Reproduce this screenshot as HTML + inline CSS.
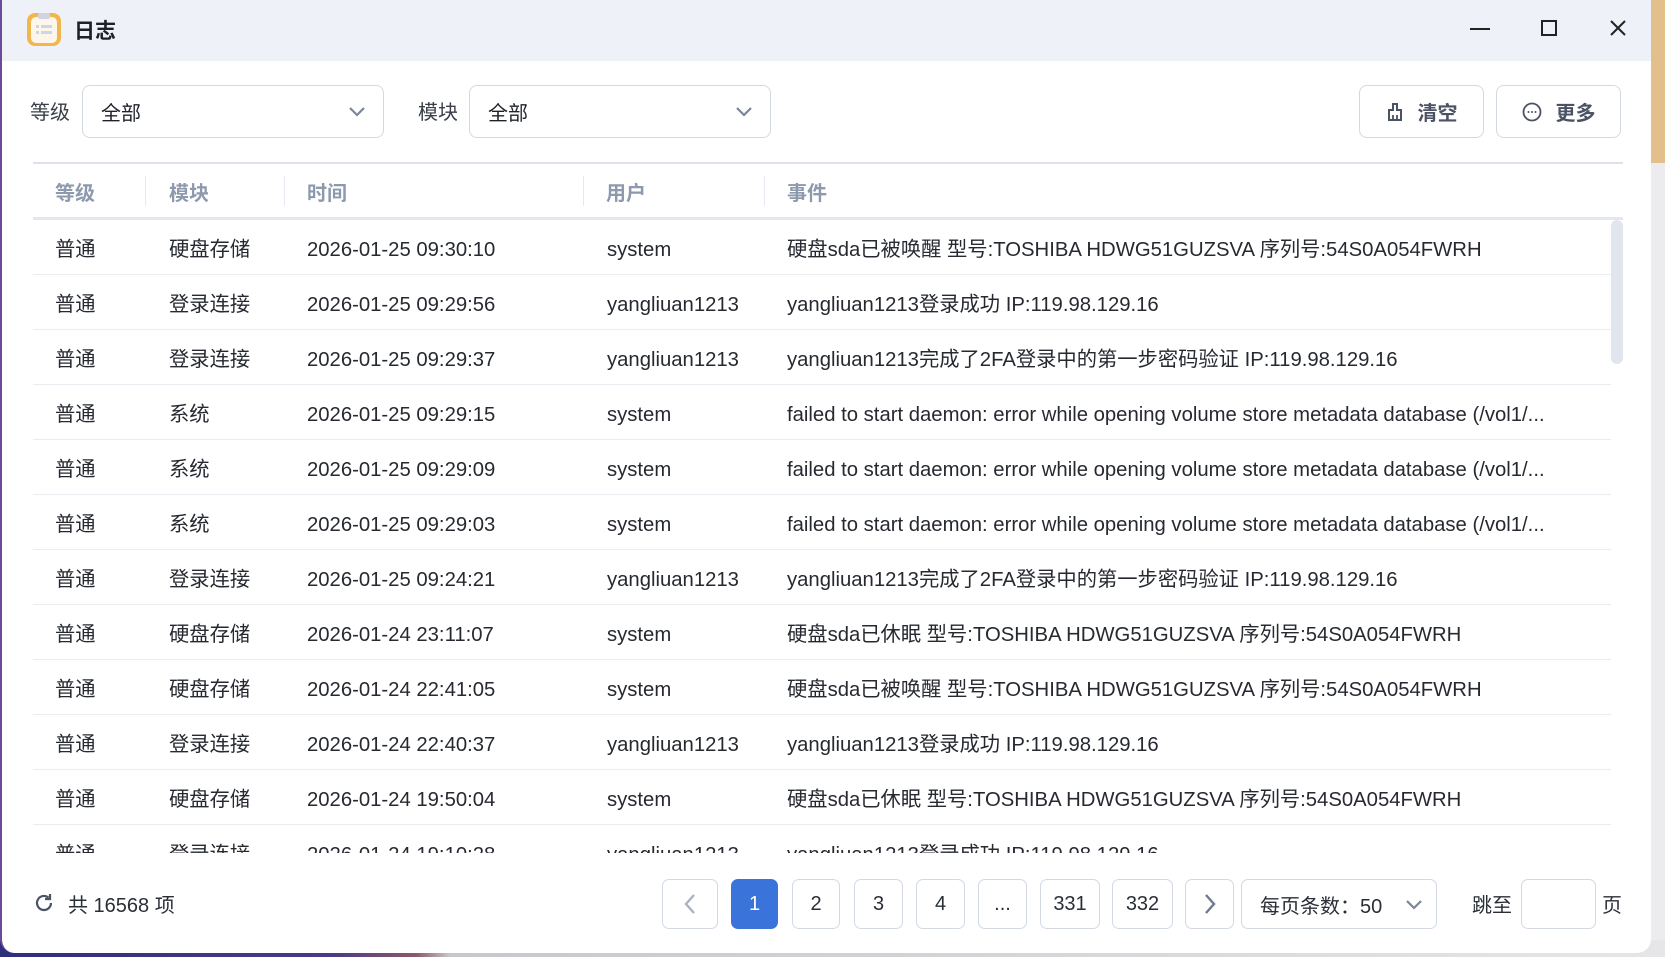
<!DOCTYPE html>
<html><head><meta charset="utf-8"><style>
*{box-sizing:border-box;margin:0;padding:0}
body{width:1665px;height:957px;position:relative;overflow:hidden;background:#ececee;font-family:"Liberation Sans","Noto Sans CJK SC",sans-serif;color:#1f2329}
.wp1{position:absolute;left:1651px;top:0;width:14px;height:163px;background:#e3bf8c}
.wp2{position:absolute;left:0;top:940px;width:1665px;height:17px;background:linear-gradient(90deg,#2e2f7a,#4b3a86 20%,#8a5a6a 25%,#c7c7cc 27%,#e6e6e8)}
.win{position:absolute;left:0;top:0;width:1651px;height:953px;background:#fff;border-radius:0 0 14px 14px;overflow:hidden;border-left:2px solid #6b4a9a}
.tb{position:absolute;left:0;top:0;width:100%;height:61px;background:#eef2f8}
.abs{position:absolute}
.sel{position:absolute;height:53px;border:1px solid #d3d9e2;border-radius:8px;font-size:20px;line-height:57px;padding:0 0 0 18px}
.btn{position:absolute;height:53px;border:1px solid #d3d9e2;border-radius:8px;font-size:20px;font-weight:bold;color:#4a5263;display:flex;align-items:center;justify-content:center;gap:14px}
.th{position:absolute;top:177px;font-size:20px;font-weight:bold;color:#8d99ad}
.sep{position:absolute;top:176px;width:1px;height:30px;background:#e6eaf0}
.row{position:absolute;left:31px;width:1578px;height:55px;border-bottom:1px solid #e9ecf1;font-size:20.3px;color:#262a30;line-height:54px}
.row span{position:absolute;top:3px;white-space:nowrap;line-height:54px}
.pb{position:absolute;top:879px;height:50px;border:1px solid #d3d9e2;border-radius:7px;font-size:20px;display:flex;align-items:center;justify-content:center;color:#2a2f36}
</style></head><body>
<div class="wp1"></div><div class="wp2"></div>
<div class="win">
<div class="tb">
 <svg class="abs" style="left:23px;top:10px" width="38" height="38" viewBox="0 0 38 38"><rect x="2" y="3" width="34" height="33" rx="8" fill="#f3b64f"/><rect x="6" y="7" width="26" height="26" rx="5" fill="#fdf6ea"/><rect x="13" y="3" width="12" height="6" rx="2" fill="#cfd6e2"/><g fill="#cfd6e2"><rect x="11" y="15" width="3" height="3"/><rect x="16" y="15" width="11" height="3"/><rect x="11" y="21" width="3" height="3"/><rect x="16" y="21" width="11" height="3"/></g></svg>
 <div class="abs" style="left:72px;top:15px;font-size:21px;font-weight:bold;color:#1d2026">日志</div>
 <div class="abs" style="left:1468px;top:28px;width:20px;height:2px;background:#222"></div>
 <div class="abs" style="left:1539px;top:20px;width:16px;height:16px;border:2px solid #222"></div>
 <svg class="abs" style="left:1607px;top:19px" width="18" height="18"><path d="M2 2L16 16M16 2L2 16" stroke="#222" stroke-width="2"/></svg>
</div>
<div class="abs" style="left:28px;top:96px;font-size:20px;color:#3a3f47">等级</div>
<div class="sel" style="left:80px;top:85px;width:302px">全部<svg class="abs" style="left:265px;top:20px" width="18" height="12"><path d="M2 2l7 7 7-7" stroke="#7a869a" stroke-width="2.2" fill="none"/></svg></div>
<div class="abs" style="left:416px;top:96px;font-size:20px;color:#3a3f47">模块</div>
<div class="sel" style="left:467px;top:85px;width:302px">全部<svg class="abs" style="left:265px;top:20px" width="18" height="12"><path d="M2 2l7 7 7-7" stroke="#7a869a" stroke-width="2.2" fill="none"/></svg></div>
<div class="btn" style="left:1357px;top:85px;width:125px"><svg width="18" height="20" viewBox="0 0 18 20"><path d="M7 2h4v6h4v10H3V8h4z" stroke="#4a5263" stroke-width="2" fill="none"/><path d="M7 13v5M11 13v5" stroke="#4a5263" stroke-width="1.8"/></svg>清空</div>
<div class="btn" style="left:1494px;top:85px;width:125px"><svg width="20" height="20"><circle cx="10" cy="10" r="8.5" stroke="#4a5263" stroke-width="1.8" fill="none"/><g fill="#4a5263"><circle cx="6.5" cy="10" r="1"/><circle cx="10" cy="10" r="1"/><circle cx="13.5" cy="10" r="1"/></g></svg>更多</div>
<div class="abs" style="left:31px;top:162px;width:1590px;height:2px;background:#dde2e9"></div>
<div class="th" style="left:53px">等级</div><div class="th" style="left:167px">模块</div><div class="th" style="left:305px">时间</div><div class="th" style="left:604px">用户</div><div class="th" style="left:785px">事件</div>
<div class="sep" style="left:143px"></div><div class="sep" style="left:282px"></div><div class="sep" style="left:581px"></div><div class="sep" style="left:762px"></div>
<div class="abs" style="left:31px;top:217px;width:1590px;height:3px;background:#e3e8ef"></div>
<div class="abs" style="left:1609px;top:220px;width:12px;height:144px;border-radius:6px;background:#e1e6ee"></div>
<div class="abs" style="left:0;top:220px;width:1609px;height:633px;overflow:hidden">
<div class="row" style="top:0"><span style="left:22px">普通</span><span style="left:136px">硬盘存储</span><span style="left:274px">2026-01-25 09:30:10</span><span style="left:574px">system</span><span style="left:754px">硬盘sda已被唤醒 型号:TOSHIBA HDWG51GUZSVA 序列号:54S0A054FWRH</span></div>
<div class="row" style="top:55px"><span style="left:22px">普通</span><span style="left:136px">登录连接</span><span style="left:274px">2026-01-25 09:29:56</span><span style="left:574px">yangliuan1213</span><span style="left:754px">yangliuan1213登录成功 IP:119.98.129.16</span></div>
<div class="row" style="top:110px"><span style="left:22px">普通</span><span style="left:136px">登录连接</span><span style="left:274px">2026-01-25 09:29:37</span><span style="left:574px">yangliuan1213</span><span style="left:754px">yangliuan1213完成了2FA登录中的第一步密码验证 IP:119.98.129.16</span></div>
<div class="row" style="top:165px"><span style="left:22px">普通</span><span style="left:136px">系统</span><span style="left:274px">2026-01-25 09:29:15</span><span style="left:574px">system</span><span style="left:754px">failed to start daemon: error while opening volume store metadata database (/vol1/...</span></div>
<div class="row" style="top:220px"><span style="left:22px">普通</span><span style="left:136px">系统</span><span style="left:274px">2026-01-25 09:29:09</span><span style="left:574px">system</span><span style="left:754px">failed to start daemon: error while opening volume store metadata database (/vol1/...</span></div>
<div class="row" style="top:275px"><span style="left:22px">普通</span><span style="left:136px">系统</span><span style="left:274px">2026-01-25 09:29:03</span><span style="left:574px">system</span><span style="left:754px">failed to start daemon: error while opening volume store metadata database (/vol1/...</span></div>
<div class="row" style="top:330px"><span style="left:22px">普通</span><span style="left:136px">登录连接</span><span style="left:274px">2026-01-25 09:24:21</span><span style="left:574px">yangliuan1213</span><span style="left:754px">yangliuan1213完成了2FA登录中的第一步密码验证 IP:119.98.129.16</span></div>
<div class="row" style="top:385px"><span style="left:22px">普通</span><span style="left:136px">硬盘存储</span><span style="left:274px">2026-01-24 23:11:07</span><span style="left:574px">system</span><span style="left:754px">硬盘sda已休眠 型号:TOSHIBA HDWG51GUZSVA 序列号:54S0A054FWRH</span></div>
<div class="row" style="top:440px"><span style="left:22px">普通</span><span style="left:136px">硬盘存储</span><span style="left:274px">2026-01-24 22:41:05</span><span style="left:574px">system</span><span style="left:754px">硬盘sda已被唤醒 型号:TOSHIBA HDWG51GUZSVA 序列号:54S0A054FWRH</span></div>
<div class="row" style="top:495px"><span style="left:22px">普通</span><span style="left:136px">登录连接</span><span style="left:274px">2026-01-24 22:40:37</span><span style="left:574px">yangliuan1213</span><span style="left:754px">yangliuan1213登录成功 IP:119.98.129.16</span></div>
<div class="row" style="top:550px"><span style="left:22px">普通</span><span style="left:136px">硬盘存储</span><span style="left:274px">2026-01-24 19:50:04</span><span style="left:574px">system</span><span style="left:754px">硬盘sda已休眠 型号:TOSHIBA HDWG51GUZSVA 序列号:54S0A054FWRH</span></div>
<div class="row" style="top:605px"><span style="left:22px">普通</span><span style="left:136px">登录连接</span><span style="left:274px">2026-01-24 19:10:28</span><span style="left:574px">yangliuan1213</span><span style="left:754px">yangliuan1213登录成功 IP:119.98.129.16</span></div>
</div>
<svg class="abs" style="left:31px;top:892px" width="22" height="22" viewBox="0 0 22 22"><path d="M18 11a7 7 0 1 1-2.5-5.4" stroke="#4a5263" stroke-width="2.2" fill="none"/><path d="M17 2v5h-5" stroke="#4a5263" stroke-width="2.2" fill="none"/></svg>
<div class="abs" style="left:66px;top:889px;font-size:20px;color:#2a2f36">共 16568 项</div>
<div class="pb" style="left:660px;width:56px"><svg width="12" height="22"><path d="M10 2L2 11l8 9" stroke="#aab3c2" stroke-width="2.4" fill="none"/></svg></div>
<div class="pb" style="left:729px;width:47px;background:#3a74da;border-color:#3a74da;color:#fff">1</div>
<div class="pb" style="left:790px;width:48px">2</div>
<div class="pb" style="left:852px;width:49px">3</div>
<div class="pb" style="left:914px;width:49px">4</div>
<div class="pb" style="left:976px;width:49px">...</div>
<div class="pb" style="left:1038px;width:60px">331</div>
<div class="pb" style="left:1110px;width:61px">332</div>
<div class="pb" style="left:1183px;width:49px"><svg width="12" height="22"><path d="M2 2l8 9-8 9" stroke="#6f7a8c" stroke-width="2.4" fill="none"/></svg></div>
<div class="pb" style="left:1239px;width:196px;justify-content:flex-start;padding-left:18px">每页条数：50<svg class="abs" style="left:163px;top:19px" width="18" height="12"><path d="M2 2l7 7 7-7" stroke="#7a869a" stroke-width="2.2" fill="none"/></svg></div>
<div class="abs" style="left:1470px;top:889px;font-size:20px;color:#2a2f36">跳至</div>
<div class="pb" style="left:1519px;width:75px"></div>
<div class="abs" style="left:1600px;top:889px;font-size:20px;color:#2a2f36">页</div>
</div>
</body></html>
